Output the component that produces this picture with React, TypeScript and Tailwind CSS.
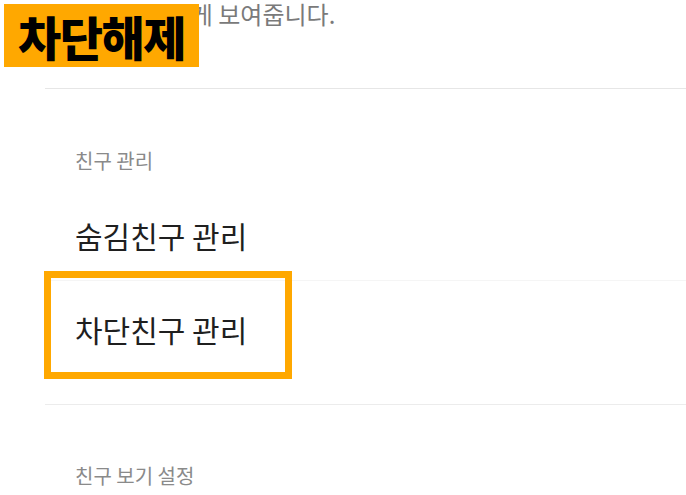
const font = "font-['Noto_Sans_CJK_KR','Noto_Sans',sans-serif]";

const App = () => {
  return (
    <div className={`relative w-[686px] h-[495px] overflow-hidden bg-white ${font}`}>
      {/* description line, mostly covered by the badge */}
      <div className="h-[88px] pl-[75px]">
        <p className="text-[24px] leading-[28px] text-[#7a7a7a] whitespace-nowrap">친구 목록에게 보여줍니다.</p>
      </div>
      <div className="ml-[45px] h-px bg-[#e6e6e6]" />

      {/* 친구 관리 */}
      <div className="pl-[75px] pt-[59px] pb-[16px]">
        <p className="text-[20px] leading-[26px] text-[#8a8a8a]">친구 관리</p>
      </div>
      <div className="h-[90px] pl-[75px] flex items-center">
        <p className="text-[30px] leading-[36px] text-[#1f1f1f]">숨김친구 관리</p>
      </div>
      <div className="ml-[45px] h-px bg-[#f5f5f5]" />
      <div className="h-[123px] pl-[75px] pt-[30px]">
        <p className="text-[30px] leading-[36px] text-[#1f1f1f]">차단친구 관리</p>
      </div>
      <div className="ml-[45px] h-px bg-[#ececec]" />

      {/* 친구 보기 설정 */}
      <div className="pl-[75px] pt-[58px]">
        <p className="text-[20px] leading-[26px] text-[#8a8a8a]">친구 보기 설정</p>
      </div>

      {/* annotations */}
      <div className="absolute left-[4px] top-[4px] w-[195px] h-[63px] bg-[#FFA800] flex items-center justify-center">
        <span className="text-[47px] leading-[60px] font-black text-black tracking-[-1.5px] whitespace-nowrap">차단해제</span>
      </div>
      <div className="absolute left-[44px] top-[271px] w-[248px] h-[108px] border-[7px] border-[#FFA800]" />
    </div>
  );
};

export default App;
